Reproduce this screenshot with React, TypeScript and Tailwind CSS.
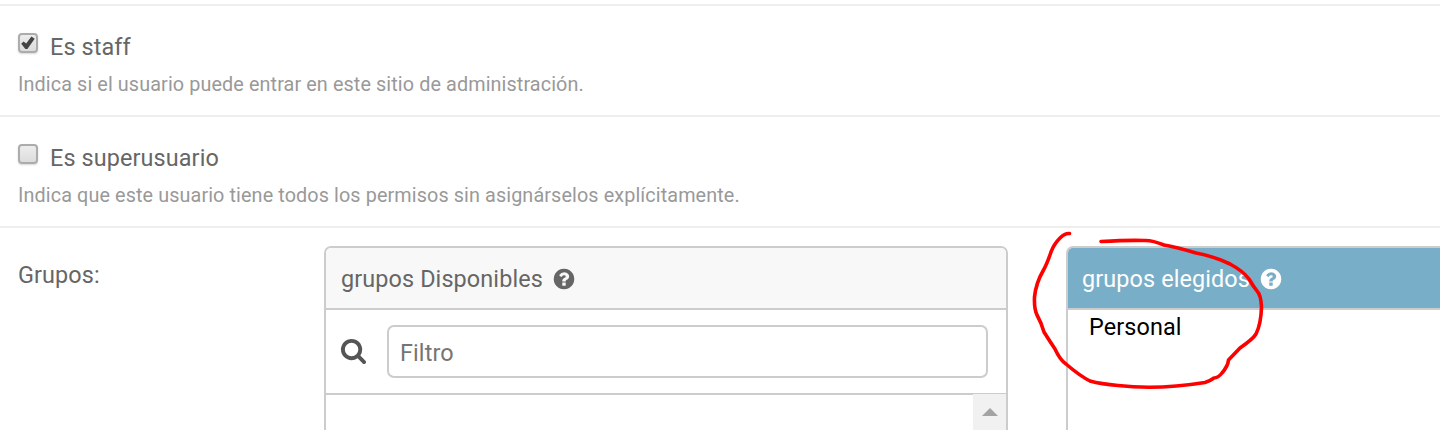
import React from "react";

function Checkbox({ checked = false }: { checked?: boolean }) {
  return (
    <span className="mt-[27px] block h-5 w-5 shrink-0 rounded-[4px] border-2 border-[#acacac] bg-linear-to-b from-[#ededed] to-[#dcdcdc] shadow-[0_1px_2px_rgba(0,0,0,0.16)]">
      {checked && (
        <svg className="block h-4 w-4" viewBox="0 0 16 16">
          <path d="M1.2 8.8 3.6 6.5 6.2 8.6 11.4 1.5 14.7 3.8 7.4 14H5.4Z" fill="#444" />
        </svg>
      )}
    </span>
  );
}

function CheckRow({ label, help, checked }: { label: string; help: string; checked?: boolean }) {
  return (
    <div className="h-[111px] border-b-2 border-[#eee] pl-[18px]">
      <div className="flex h-[61px] gap-3">
        <Checkbox checked={checked} />
        <span className="mt-[27px] text-[23.4px] leading-7 tracking-[0.12px] whitespace-nowrap text-[#666]">{label}</span>
      </div>
      <p className="mt-1 text-[19.8px] leading-7 tracking-[0.11px] whitespace-nowrap text-[#999]">{help}</p>
    </div>
  );
}

function HelpIcon({ className }: { className: string }) {
  return (
    <svg className={className} viewBox="0 0 1792 1792" fill="currentColor">
      <path d="M1024 1376v-192q0-14-9-23t-23-9h-192q-14 0-23 9t-9 23v192q0 14 9 23t23 9h192q14 0 23-9t9-23zm256-672q0-88-55.500-163t-138.500-116-170-41q-243 0-371 213-15 24 8 42l132 100q7 6 19 6 16 0 25-12 53-68 86-92 34-24 86-24 48 0 85.500 26t37.500 59q0 38-20 61t-68 45q-63 28-115.500 86.500t-52.500 125.500v36q0 14 9 23t23 9h192q14 0 23-9t9-23q0-19 21.500-49.500t54.500-49.500q32-18 49-28.500t46-35 44.500-48 28-60.500 12.500-81zm384 192q0 209-103 385.500t-279.500 279.500-385.500 103-385.500-103-279.500-279.500-103-385.500 103-385.500 279.500-279.500 385.500-103 385.500 103 279.500 279.500 103 385.500z" />
    </svg>
  );
}

function SearchIcon() {
  return (
    <svg className="mt-[27px] -ml-px h-[27px] w-[27px] shrink-0 text-[#555]" viewBox="0 0 1792 1792" fill="currentColor">
      <path d="M1216 832q0-185-131.500-316.500t-316.500-131.500-316.500 131.500-131.500 316.500 131.500 316.500 316.500 131.500 316.500-131.500 131.500-316.500zm512 832q0 52-38 90t-90 38q-54 0-90-38l-343-342q-179 124-399 124-143 0-273.500-55.500t-225-150-150-225-55.500-273.500 55.500-273.500 150-225 225-150 273.500-55.500 273.500 55.500 225 150 150 225 55.500 273.500q0 220-124 399l343 343q37 37 37 90z" />
    </svg>
  );
}

export default function App() {
  return (
    <div className="relative h-[430px] w-[1440px] overflow-hidden bg-white font-[Roboto,sans-serif]">
      <div className="h-1.5 border-b-2 border-[#eee]" />
      <CheckRow label="Es staff" help="Indica si el usuario puede entrar en este sitio de administración." checked />
      <CheckRow label="Es superusuario" help="Indica que este usuario tiene todos los permisos sin asignárselos explícitamente." />
      <div className="flex h-[202px] items-start pt-[18px] pl-[18px] text-[23.4px] leading-7 tracking-[0.12px] text-[#666]">
        <div className="w-[306px] shrink-0 pt-[15px]">Grupos:</div>
        <section className="h-[220px] w-[684px] shrink-0 overflow-hidden rounded-t-[7px] border-2 border-[#ccc]">
          <h2 className="flex h-[62px] items-center gap-[9px] border-b-2 border-[#ccc] bg-[#f8f8f8] pl-[15px]">
            <span className="pt-0.5">grupos Disponibles</span>
            <HelpIcon className="mt-0.5 h-6 w-6" />
          </h2>
          <div className="flex h-[85px] border-b-2 border-[#ccc] pl-[15px]">
            <SearchIcon />
            <div className="mt-[15px] ml-5 flex h-[53px] w-[601px] items-center rounded-[7px] border-2 border-[#ccc] pt-0.5 pl-[11px] text-[#757575]">Filtro</div>
          </div>
          <div className="-mt-px flex h-20 justify-end">
            <div className="flex w-[33px] justify-center bg-[#f1f1f1] pt-[14px]">
              <svg className="h-2 w-4" viewBox="0 0 16 8"><path d="M0 8 8 0l8 8Z" fill="#a3a3a3" /></svg>
            </div>
          </div>
        </section>
        <section className="ml-[58px] h-[220px] w-[684px] shrink-0 overflow-hidden rounded-t-[7px] border-2 border-[#ccc]">
          <h2 className="flex h-[62px] items-center gap-[9px] border-b-2 border-[#ccc] bg-[#79aec8] pl-[14px] text-white">
            <span className="pt-0.5">grupos elegidos</span>
            <HelpIcon className="mt-0.5 h-6 w-6" />
          </h2>
          <div className="pt-[3px] pl-[21px] text-black">Personal</div>
        </section>
      </div>
      <svg className="pointer-events-none absolute inset-0 h-[430px] w-[1440px]" viewBox="0 0 1440 430" fill="none" stroke="#f00" strokeWidth="3.6" strokeLinecap="round" strokeLinejoin="round">
        <path d="M1069.500 233.500 Q1065 233 1060 238 Q1054 244 1051 252 Q1047 264 1043 271 Q1036 283 1034.500 297 Q1034 309 1037 315 Q1041 322 1044 332 Q1049 340 1055 349 Q1060 360 1066 364 Q1080 376 1090 381 Q1101 384 1118 385.500 Q1158 390 1205 382.500 Q1210 381 1214 378 Q1218 378 1222 373 Q1228 366 1228.500 360 L1240 348 Q1253 339 1256 334 Q1261 324 1261.500 307 Q1261 295 1257 291 Q1253 286 1249 279 Q1243 271 1230 264 Q1213 256 1196 253 Q1176 247 1164 245 Q1152 240 1144 240.500 Q1128 240 1101 241.500" />
      </svg>
    </div>
  );
}
